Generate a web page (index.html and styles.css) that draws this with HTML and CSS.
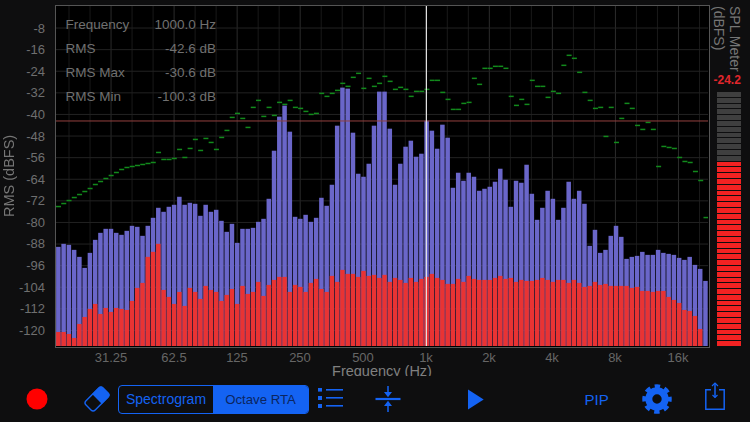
FILE: index.html
```html
<!DOCTYPE html>
<html lang="en">
<head>
<meta charset="utf-8">
<title>Octave RTA</title>
<link rel="stylesheet" href="styles.css">
</head>
<body>
<main class="app">
  <section class="chart-row">
    <div class="yaxis">
      <div class="ytitle">RMS (dBFS)</div>
      <div class="yticks">
        <span>-8</span><span>-16</span><span>-24</span><span>-32</span><span>-40</span>
        <span>-48</span><span>-56</span><span>-64</span><span>-72</span><span>-80</span>
        <span>-88</span><span>-96</span><span>-104</span><span>-112</span><span>-120</span>
      </div>
    </div>
    <div class="plot">
      <svg id="rta" class="rta" viewBox="56.5 6.5 651 339" preserveAspectRatio="none" aria-hidden="true"></svg>
      <dl class="readout">
        <dt>Frequency</dt><dd>1000.0 Hz</dd>
        <dt>RMS</dt><dd>-42.6 dB</dd>
        <dt>RMS Max</dt><dd>-30.6 dB</dd>
        <dt>RMS Min</dt><dd>-100.3 dB</dd>
      </dl>
    </div>
    <aside class="meter">
      <div class="meter-title">SPL Meter<br>(dBFS)</div>
      <div class="meter-value">-24.2</div>
      <div id="segments" class="segments"></div>
    </aside>
  </section>
  <div class="xticks">
    <span>31.25</span><span>62.5</span><span>125</span><span>250</span><span>500</span>
    <span>1k</span><span>2k</span><span>4k</span><span>8k</span><span>16k</span>
  </div>
  <div class="xtitle">Frequency (Hz)</div>
  <nav class="toolbar">
    <svg class="tool t-record" width="22" height="22" viewBox="0 0 22 22"><circle cx="11" cy="11" r="10.5" fill="#ff0000"/></svg>
    <svg class="tool t-eraser" width="28" height="28" viewBox="-14 -14 28 28">
      <g transform="rotate(-45)">
        <rect x="-12" y="-6.5" width="24" height="13" rx="3" fill="none" stroke="#1463f3" stroke-width="1.4"/>
        <path d="M0-7H9a3.6 3.6 0 0 1 3.6 3.6V3.4A3.6 3.6 0 0 1 9 7H0Z" fill="#1463f3"/>
      </g>
    </svg>
    <div class="segmented">
      <span class="seg">Spectrogram</span>
      <span class="seg seg-on">Octave RTA</span>
    </div>
    <svg class="tool t-list" width="26" height="22" viewBox="0 0 26 22" fill="#1463f3">
      <rect x="0" y="0" width="4" height="3.6"/><rect x="0" y="8" width="4" height="4"/><rect x="0" y="16" width="4" height="4"/>
      <rect x="8" y="1" width="17" height="1.6"/><rect x="8" y="9" width="17" height="1.6"/><rect x="8" y="17" width="17" height="1.6"/>
    </svg>
    <svg class="tool t-compress" width="26" height="28" viewBox="0 0 26 28" fill="none" stroke="#1463f3">
      <path d="M0.500 14H25.500" stroke-width="2.200"/>
      <path d="M13 1V10M13 18V27" stroke-width="1.500"/>
      <path d="M9 7H17L13 12.300ZM9 21H17L13 15.700Z" fill="#1463f3" stroke="none"/>
    </svg>
    <svg class="tool t-play" width="16" height="21" viewBox="0 0 16 21"><path d="M0 0.500L15.700 10.500L0 20.500Z" fill="#1463f3"/></svg>
    <span class="pip">PIP</span>
    <svg class="tool t-gear" width="30" height="30" viewBox="-15 -15 30 30" fill="none" stroke="#1463f3">
      <circle r="8.200" stroke-width="7"/>
      <circle r="12.500" stroke-width="4.500" stroke-dasharray="5.300 4.517" stroke-dashoffset="2.650"/>
    </svg>
    <svg class="tool t-share" width="20" height="29" viewBox="0 0 20 29" fill="none" stroke="#1463f3" stroke-width="1.500">
      <path d="M6 7.800H0.800V27.200H19.200V7.800H14"/>
      <path d="M10 1V15.500"/>
      <path d="M7 4L10 1L13 4M7.500 13L10 15.500L12.500 13" stroke-width="1.200"/>
    </svg>
  </nav>
</main>
<script src="script.js"></script>
</body>
</html>
```

FILE: styles.css
```css
* { box-sizing: border-box; }

html, body {
  margin: 0;
  width: 750px;
  height: 422px;
  overflow: hidden;
  background: #0e0e0f;
}

.app {
  width: 750px;
  height: 422px;
  display: flex;
  flex-direction: column;
  font-family: "Liberation Sans", Arial, sans-serif;
  color: #6f6f6f;
}

.chart-row {
  display: flex;
  height: 348px;
  flex: none;
}

.yaxis {
  width: 55px;
  flex: none;
  display: flex;
}

.ytitle {
  writing-mode: vertical-rl;
  transform: rotate(180deg);
  width: 18px;
  text-align: center;
  font-size: 14.500px;
  line-height: 18px;
  height: 352px;
  color: #767676;
}

.yticks {
  width: 27px;
  padding-top: 17.500px;
  display: grid;
  grid-auto-rows: 21.57px;
  justify-items: end;
  align-items: center;
  font-size: 13px;
  color: #6f6f6f;
}

.plot {
  position: relative;
  width: 654.500px;
  height: 342.500px;
  margin-top: 5px;
  flex: none;
  border: 1.500px solid #555;
  background: #000;
}

.rta {
  display: block;
  width: 651.500px;
  height: 339.500px;
  filter: blur(0.25px);
}

.readout {
  position: absolute;
  left: 9.500px;
  top: 6.500px;
  width: 150.500px;
  margin: 0;
  display: grid;
  grid-template-columns: auto auto;
  justify-content: space-between;
  grid-auto-rows: 24px;
  align-items: center;
  font-size: 13.500px;
  color: #707070;
}

.readout dt { margin: 0; }
.readout dd { margin: 0; text-align: right; }

.meter {
  width: 40px;
  flex: none;
  padding: 6px 0 0 4px;
  display: flex;
  flex-direction: column;
}

.meter-title {
  writing-mode: vertical-rl;
  width: 32px;
  height: 66px;
  margin-left: -2.500px;
  font-size: 14px;
  line-height: 16px;
  color: #767676;
  white-space: nowrap;
}

.meter-value {
  height: 16px;
  line-height: 16px;
  font-size: 12px;
  font-weight: 700;
  color: #e0262c;
  white-space: nowrap;
}

.segments {
  margin: 4px 0 0 3.500px;
  width: 24px;
  height: 254px;
  display: flex;
  flex-direction: column;
  gap: 1px;
}

.segments i { flex: 1; display: block; background: #3f3f3f; }
.segments i.hot { background: #f22222; }

.xticks {
  flex: none;
  height: 16px;
  padding: 4px 0 0 79.500px;
  display: grid;
  grid-template-columns: repeat(10, 63px);
  justify-items: center;
  align-items: center;
  line-height: 12px;
  font-size: 13px;
  color: #666;
}

.xtitle {
  flex: none;
  height: 12px;
  width: 764px;
  overflow: hidden;
  text-align: center;
  line-height: 14px;
  font-size: 14.500px;
  color: #808080;
}

.toolbar {
  flex: 1;
  display: flex;
  align-items: center;
  padding-left: 26px;
  background: #0e0e0f;
}

.tool { display: block; flex: none; }
.t-eraser { margin-left: 35px; }
.t-list { margin-left: 9px; margin-top: -1px; }
.t-compress { margin-left: 31px; margin-top: -1px; }
.t-play { margin-left: 67px; }
.t-gear { margin-left: 33px; margin-top: -1px; }
.t-share { margin-left: 33px; margin-top: -5px; }

.segmented {
  display: flex;
  width: 191px;
  height: 29px;
  margin-left: 7px;
  border: 1.200px solid #1463f3;
  border-radius: 4px;
  overflow: hidden;
  font-size: 14px;
  color: #1463f3;
}

.seg {
  flex: 1;
  display: flex;
  align-items: center;
  justify-content: center;
}

.seg-on {
  flex: 0 0 95px;
  font-size: 13.200px;
  background: #1463f3;
  color: #0b2560;
}

.pip {
  margin-left: 100.500px;
  width: 24px;
  font-size: 15px;
  color: #1463f3;
  flex: none;
}
```

FILE: script.js
```js
var blue = [247,244,245,250,257,268,253,240,233,229,229,233,235,231,226,227,236,226,218,208,212,207,205,197,205,203,204,216,205,212,210,221,232,224,243,229,229,228,222,219,199,
151,117,106,132,217,219,215,222,218,198,206,185,126,88,89,133,174,177,164,126,92,92,129,185,164,147,141,157,154,121,131,149,125,138,188,173,181,173,177,191,189,187,
182,169,180,207,181,183,165,194,220,208,191,199,220,208,182,199,191,204,246,230,253,250,236,226,237,259,257,256,252,255,255,250,253,254,255,258,260,257,265,269,281];
var red = [332,332,334,338,324,317,309,304,314,308,312,308,309,310,301,288,283,257,252,244,290,297,304,292,306,288,292,299,286,290,292,301,295,289,304,286,294,292,282,296,285,
280,277,277,292,285,287,292,283,279,289,292,276,282,270,274,274,277,271,276,275,278,275,282,278,280,283,278,282,279,277,274,278,280,284,284,279,282,276,279,280,280,280,
278,276,279,278,282,280,281,281,280,278,280,282,280,280,283,280,283,287,286,282,285,284,286,286,286,286,288,287,291,291,292,291,291,297,300,303,310,311,316,329,346];
var peak = [206,203,200,197,194,191,188,184,181,178,175,172,169,167,166,165,164,163,162,152,159,159,158,149,157,148,139,150,138,142,149,137,130,117,113,118,127,107,100,116,107,115,102,104,100,107,108,111,114,113,93,96,93,90,83,86,77,73,88,78,86,83,76,81,89,87,89,96,91,91,89,80,80,92,99,109,109,103,102,78,84,68,68,66,66,68,96,105,99,104,80,86,86,97,91,93,65,55,58,72,92,100,108,107,136,107,142,118,103,108,125,129,122,129,166,146,147,148,157,161,162,171,180,217];
var NS = "http://www.w3.org/2000/svg";
var svg = document.getElementById("rta");

function add(tag, attrs) {
  var el = document.createElementNS(NS, tag);
  for (var k in attrs) el.setAttribute(k, attrs[k]);
  svg.appendChild(el);
}

var i, x;
for (i = 0; i < 31; i++) {
  x = 69 + i * 21;
  var major = (x - 111) % 63 === 0;
  add("rect", { x: x, y: 6, width: 1, height: 340, fill: major ? "#2b2b2b" : "#191919" });
}
for (i = 0; i < 15; i++) {
  add("rect", { x: 56, y: 28 + i * 21.57, width: 652, height: 1, fill: "#222" });
}
for (i = 0; i < peak.length; i++) {
  add("rect", { x: 56.5 + i * 5.26, y: peak[i], width: 5, height: 1.5, fill: "#128a1c" });
}
for (i = 0; i < blue.length; i++) {
  x = 56.6 + i * 5.257;
  add("rect", { x: x, y: blue[i], width: 4.5, height: 346 - blue[i], fill: "#6a66c9" });
  add("rect", { x: x, y: red[i], width: 4.5, height: Math.max(0, 346 - red[i]), fill: "#e93333" });
}
add("rect", { x: 56, y: 120.8, width: 652, height: 1, fill: "#93403f" });
add("rect", { x: 426, y: 6, width: 1.2, height: 340, fill: "#e2e2e2" });

var box = document.getElementById("segments");
for (i = 0; i < 44; i++) {
  var s = document.createElement("i");
  if (i >= 12) s.className = "hot";
  box.appendChild(s);
}
```
